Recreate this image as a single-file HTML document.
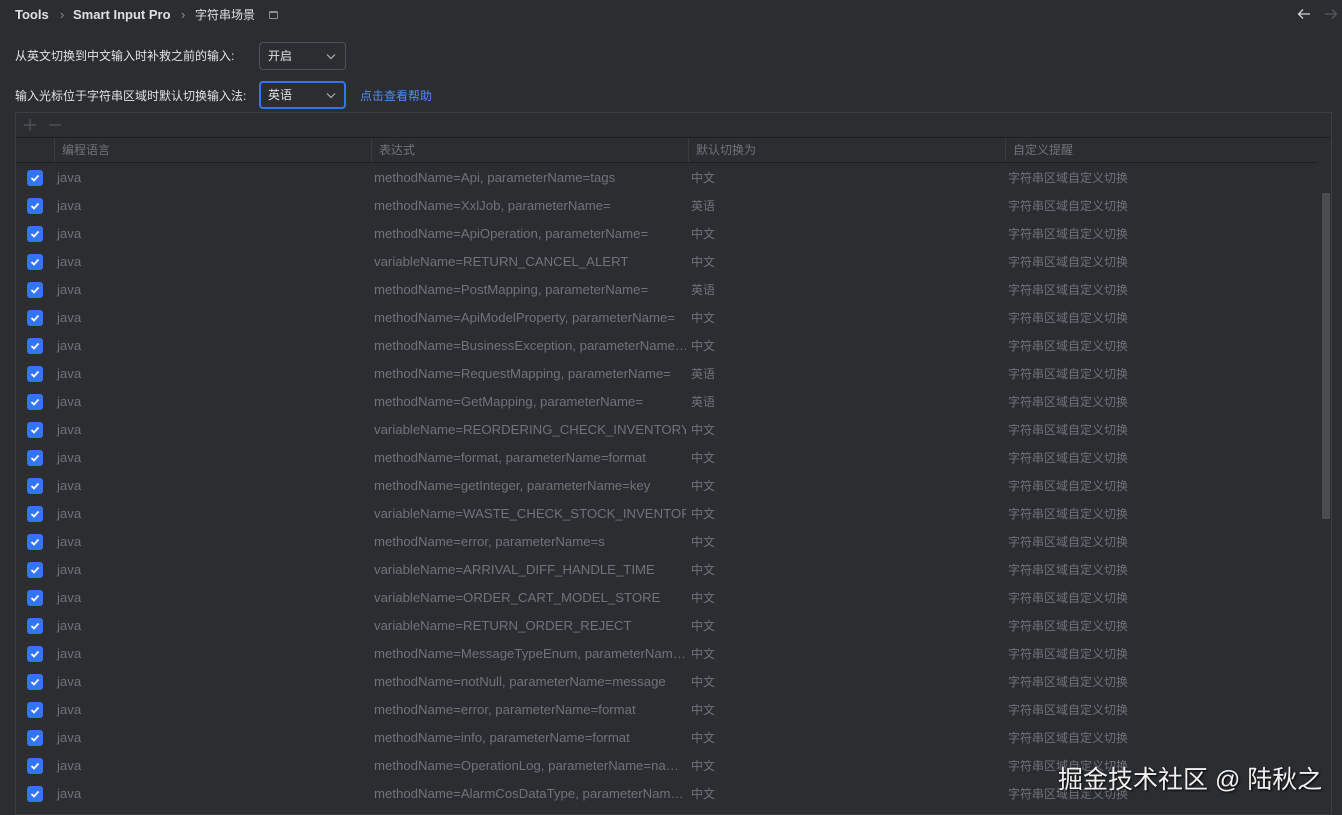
<!DOCTYPE html>
<html><head><meta charset="utf-8"><style>
*{margin:0;padding:0;box-sizing:border-box}
body{width:1342px;height:815px;background:#2b2d30;font-family:"Liberation Sans","Noto Sans CJK SC",sans-serif;color:#dfe1e5;position:relative;overflow:hidden;font-size:13px}
.abs{position:absolute;white-space:nowrap}
.bc{top:7px;font-size:13px;font-weight:bold;color:#dfe1e5}
.sel{position:absolute;left:259px;width:87px;height:28px;border:1px solid #4e5157;border-radius:4px;background:#2b2d30;padding-left:8px;line-height:26px;font-size:12px}
.sel svg{position:absolute;right:9px;top:10px}
.table{position:absolute;left:15px;top:112px;width:1317px;height:703px;border:1px solid #3c3f41;background:#2b2d30}
.tb{height:25px;border-bottom:1px solid #1e1f22}
.hdr{position:absolute;top:25px;left:0;width:1302px;height:25px;border-bottom:1px solid #1e1f22;font-size:12px;color:#6f737a}
.hdr div{position:absolute;top:0;height:24px;line-height:24px;padding-left:7px;border-left:1px solid #393b40}
.row{position:absolute;left:0;width:1300px;height:28px;font-size:12px;color:#6f737a}
.row span{position:absolute;top:0;line-height:28px;white-space:nowrap}
.row .e{font-size:13.2px}
.cb{position:absolute;left:11px;top:6px;width:16px;height:16px;background:#3574f0;border-radius:3px}
.cb svg{position:absolute;left:3px;top:3px}
</style></head><body>
<div class="abs bc" style="left:15px">Tools</div>
<div class="abs bc" style="left:60px;color:#8c8f94;font-weight:normal">›</div>
<div class="abs bc" style="left:73px">Smart Input Pro</div>
<div class="abs bc" style="left:181px;color:#8c8f94;font-weight:normal">›</div>
<div class="abs bc" style="left:195px;top:6px;font-weight:normal;font-size:12px">字符串场景</div>
<div class="abs" style="left:269px;top:11px;width:9px;height:8px;border:1px solid #8c8f94;border-radius:1px;border-top-width:2px"></div>
<svg class="abs" style="left:1297px;top:8px" width="14" height="12"><path d="M13 6H2M6 1.5L1.5 6L6 10.5" stroke="#cfd1d5" stroke-width="1.3" fill="none"/></svg>
<svg class="abs" style="left:1324px;top:8px" width="14" height="12"><path d="M1 6H12M8 1.5L12.5 6L8 10.5" stroke="#55585d" stroke-width="1.3" fill="none"/></svg>

<div class="abs" style="left:15px;top:47px;font-size:12px">从英文切换到中文输入时补救之前的输入:</div>
<div class="sel" style="top:42px">开启<svg width="10" height="7"><path d="M1 1.5L5 5.5L9 1.5" stroke="#aeb1b6" stroke-width="1.2" fill="none"/></svg></div>
<div class="abs" style="left:15px;top:87px;font-size:12px">输入光标位于字符串区域时默认切换输入法:</div>
<div class="sel" style="top:81px;border:2px solid #3574f0;line-height:24px;padding-left:7px">英语<svg width="10" height="7" style="right:8px;top:9px"><path d="M1 1.5L5 5.5L9 1.5" stroke="#aeb1b6" stroke-width="1.2" fill="none"/></svg></div>
<div class="abs" style="left:360px;top:87px;color:#548af7;font-size:12px">点击查看帮助</div>

<div class="table">
<div class="tb"><svg style="position:absolute;left:7px;top:5px" width="14" height="14"><path d="M7 1V13M1 7H13" stroke="#55585d" stroke-width="1.2"/></svg><svg style="position:absolute;left:32px;top:5px" width="14" height="14"><path d="M1 7H13" stroke="#55585d" stroke-width="1.2"/></svg></div>
<div class="hdr">
<div style="left:38px;width:318px">编程语言</div>
<div style="left:355px;width:318px">表达式</div>
<div style="left:672px;width:318px">默认切换为</div>
<div style="left:989px;width:313px">自定义提醒</div>
</div>
<div style="position:absolute;left:1306px;top:80px;width:8px;height:326px;background:#4a4c50;border-radius:1px"></div>
<div id="rows"></div>
</div>
<div class="abs" style="left:1058px;top:760px;font-size:25px;color:#f0f0f0;text-shadow:1px 1px 2px #000">掘金技术社区 @ 陆秋之</div>
<script>
var d=[["methodName=Api, parameterName=tags","中文"],["methodName=XxlJob, parameterName=","英语"],["methodName=ApiOperation, parameterName=","中文"],["variableName=RETURN_CANCEL_ALERT","中文"],["methodName=PostMapping, parameterName=","英语"],["methodName=ApiModelProperty, parameterName=","中文"],["methodName=BusinessException, parameterName…","中文"],["methodName=RequestMapping, parameterName=","英语"],["methodName=GetMapping, parameterName=","英语"],["variableName=REORDERING_CHECK_INVENTORY","中文"],["methodName=format, parameterName=format","中文"],["methodName=getInteger, parameterName=key","中文"],["variableName=WASTE_CHECK_STOCK_INVENTORY_…","中文"],["methodName=error, parameterName=s","中文"],["variableName=ARRIVAL_DIFF_HANDLE_TIME","中文"],["variableName=ORDER_CART_MODEL_STORE","中文"],["variableName=RETURN_ORDER_REJECT","中文"],["methodName=MessageTypeEnum, parameterNam…","中文"],["methodName=notNull, parameterName=message","中文"],["methodName=error, parameterName=format","中文"],["methodName=info, parameterName=format","中文"],["methodName=OperationLog, parameterName=na…","中文"],["methodName=AlarmCosDataType, parameterNam…","中文"]];
var h="";d.forEach(function(r,i){h+='<div class="row" style="top:'+(51+i*28)+'px"><div class="cb"><svg width="10" height="10"><path d="M1.5 5L4 7.5L8.5 2.5" stroke="#fff" stroke-width="1.8" fill="none"/></svg></div><span class="e" style="left:41px">java</span><span class="e" style="left:358px;width:312px;overflow:hidden">'+r[0]+'</span><span style="left:675px">'+r[1]+'</span><span style="left:992px">字符串区域自定义切换</span></div>'});
document.getElementById("rows").innerHTML=h;
</script>
</body></html>
